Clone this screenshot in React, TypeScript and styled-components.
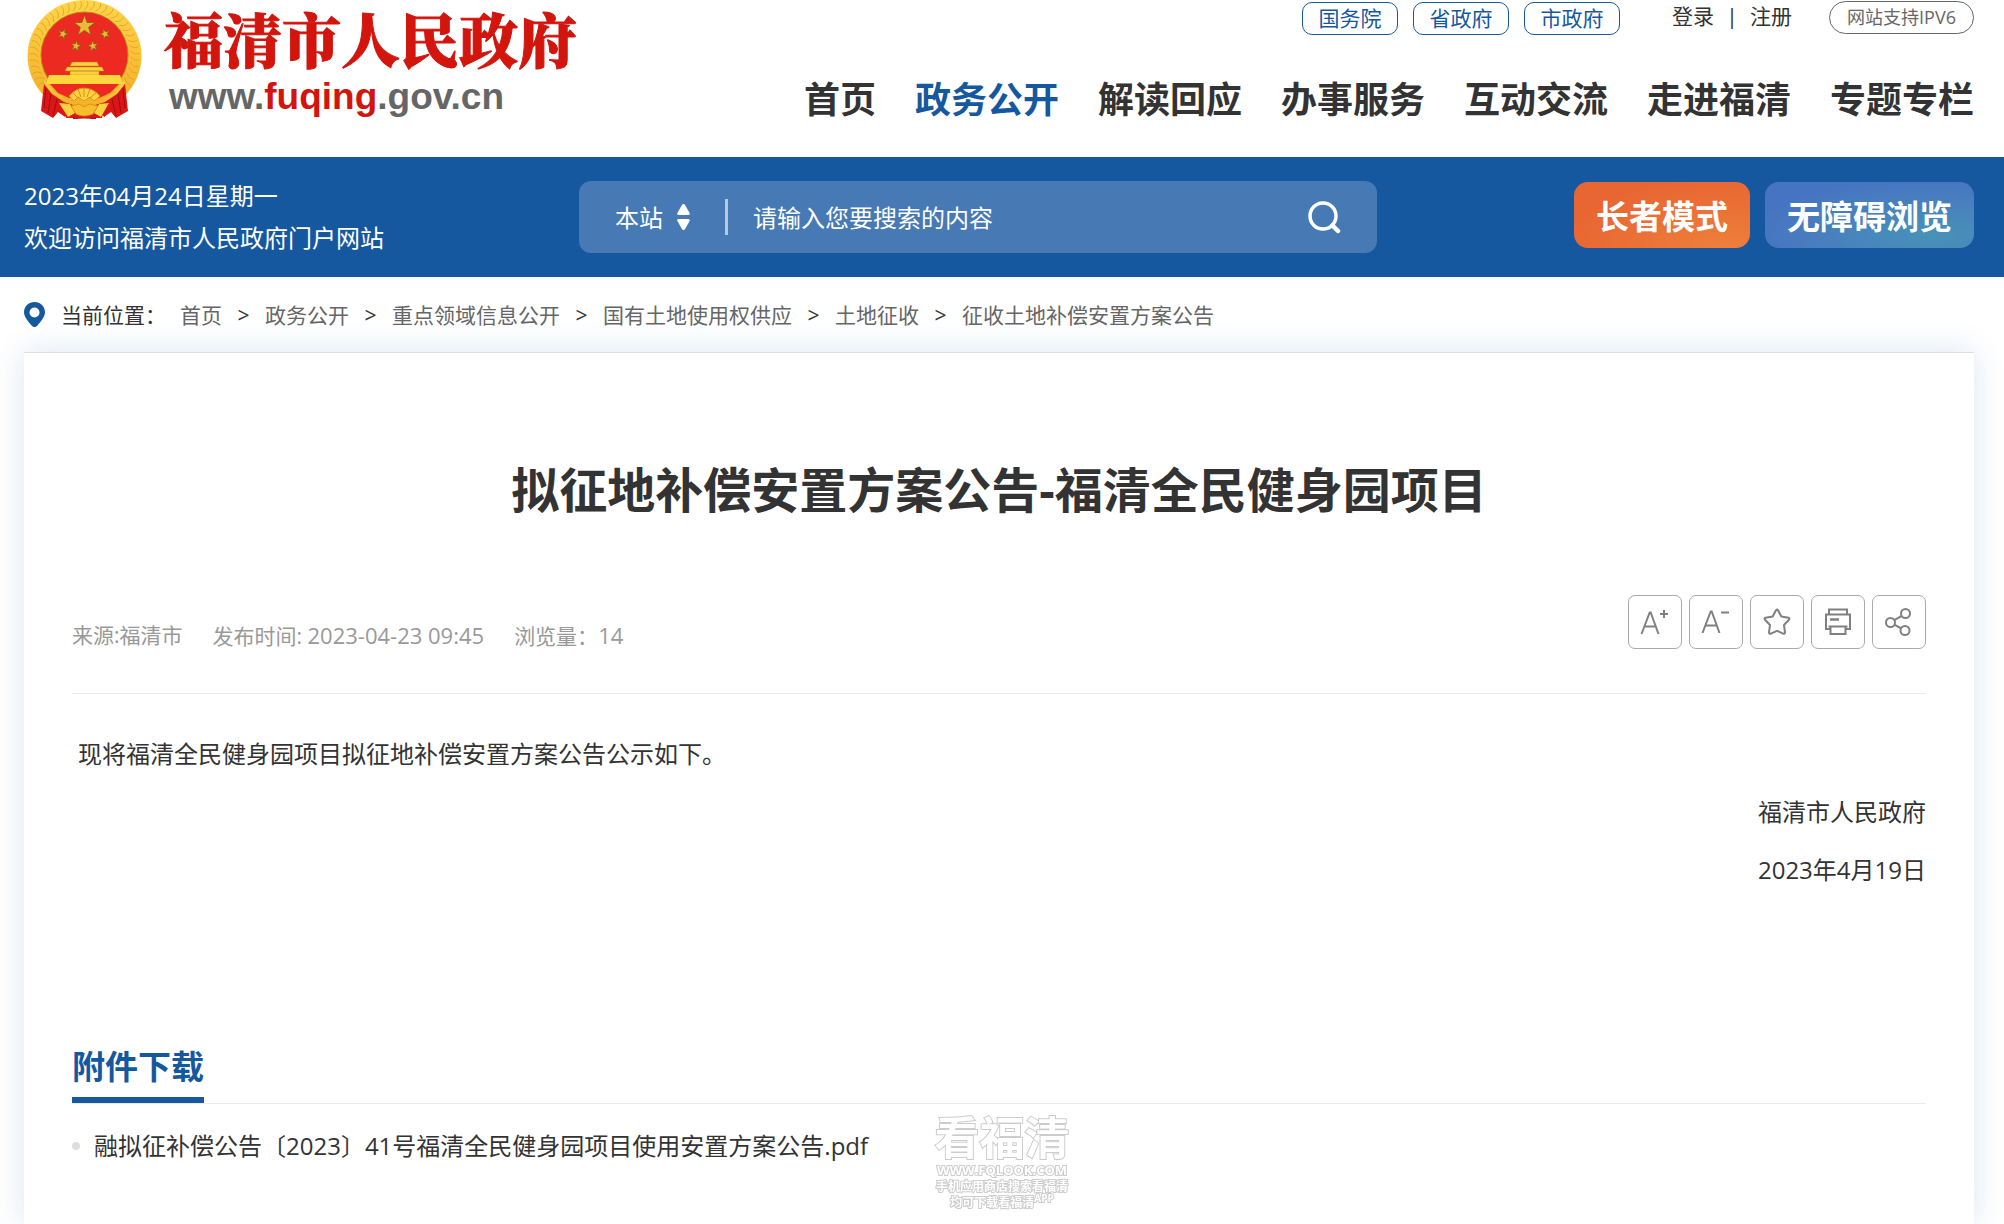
import React from "react";
import styled, { createGlobalStyle } from "styled-components";

const BLUE = "#16589f";
const INK = "#333333";
const SANS = '"Open Sans", "Noto Sans CJK SC", sans-serif';

const GlobalStyle = createGlobalStyle`
  *, *::before, *::after { box-sizing: border-box; }
  body {
    margin: 0;
    background: #ffffff;
    color: ${INK};
    font-family: ${SANS};
    font-size: 24px;
  }
  h1, h2, p, ul { margin: 0; padding: 0; }
  a { color: inherit; text-decoration: none; }
  button, input, select { font-family: inherit; }
`;

const Page = styled.div`
  display: flex;
  flex-direction: column;
  min-height: 100vh;
`;

const Header = styled.header`
  display: flex;
  justify-content: space-between;
  height: 157px;
  padding: 0 30px 0 27px;
`;

const Brand = styled.a`
  display: flex;
  align-items: flex-start;
  gap: 22px;
`;

const BrandText = styled.span`
  display: flex;
  flex-direction: column;
`;

const BrandName = styled.span`
  font-family: "Noto Serif CJK SC", "Noto Sans CJK SC", serif;
  font-size: 59px;
  font-weight: 900;
  line-height: 76px;
  color: #d2150d;
  -webkit-text-stroke: 1px #d2150d;
`;

const BrandUrl = styled.span`
  padding-left: 5px;
  font-family: "Liberation Sans", Arial, sans-serif;
  font-size: 37px;
  font-weight: 700;
  line-height: 42px;
  color: #666666;
`;

const BrandAccent = styled.span`
  color: #d2150d;
`;

const HeaderSide = styled.div`
  display: flex;
  flex-direction: column;
  align-items: flex-end;
`;

const TopLinks = styled.div`
  display: flex;
  align-items: flex-start;
  padding-top: 1px;
`;

const PillGroup = styled.div`
  display: flex;
  gap: 15px;
  padding-top: 1px;
`;

const Pill = styled.a`
  width: 96px;
  height: 33px;
  border: 1px solid ${BLUE};
  border-radius: 10px;
  color: ${BLUE};
  font-size: 21px;
  line-height: 31px;
  text-align: center;
`;

const Account = styled.div`
  display: flex;
  margin: 0 37px 0 52px;
  font-size: 21px;
  line-height: 31px;
`;

const AccountBar = styled.span`
  width: 36px;
  text-align: center;
`;

const Ipv6 = styled.a`
  width: 145px;
  height: 33px;
  border: 1px solid #666666;
  border-radius: 17px;
  color: #666666;
  font-size: 18px;
  line-height: 31px;
  text-align: center;
`;

const Nav = styled.nav`
  display: flex;
  gap: 39px;
  margin-top: 38px;
`;

const NavLink = styled.a<{ $active?: boolean }>`
  font-size: 36px;
  font-weight: 700;
  line-height: 54px;
  color: ${(p) => (p.$active ? BLUE : INK)};
`;

const Banner = styled.section`
  display: grid;
  grid-template-columns: 555fr 798fr 597fr;
  align-items: center;
  height: 120px;
  padding: 0 30px 0 24px;
  background: ${BLUE};
  color: #ffffff;
`;

const Welcome = styled.div`
  line-height: 42px;
  white-space: nowrap;
`;

const SearchForm = styled.form`
  display: flex;
  align-items: center;
  height: 72px;
  padding: 0 36px;
  border-radius: 12px;
  background: #4779b4;
`;

const Scope = styled.label`
  display: flex;
  align-items: center;
  gap: 14px;
  width: 110px;
`;

const ScopeSelect = styled.select`
  width: 48px;
  height: 40px;
  padding: 0;
  border: 0;
  background: transparent;
  color: #ffffff;
  font-size: 24px;
  appearance: none;
`;

const SearchInput = styled.input`
  flex: 1;
  min-width: 0;
  height: 36px;
  padding: 0 25px;
  border: 0;
  border-left: 3px solid #b5c9e1;
  outline: 0;
  background: transparent;
  color: #ffffff;
  font-size: 24px;
  &::placeholder { color: #ffffff; opacity: 1; }
`;

const SearchButton = styled.button`
  display: flex;
  padding: 0;
  border: 0;
  background: transparent;
  color: #ffffff;
`;

const Modes = styled.div`
  display: flex;
  justify-content: flex-end;
  gap: 15px;
  padding-bottom: 4px;
`;

const ModeButton = styled.button<{ $fill: string }>`
  height: 66px;
  padding: 0 22px;
  border: 0;
  border-radius: 14px;
  background: ${(p) => p.$fill};
  color: #ffffff;
  font-size: 33px;
  font-weight: 700;
  white-space: nowrap;
`;

const Crumbs = styled.nav`
  display: flex;
  align-items: center;
  height: 75px;
  padding: 0 24px;
  font-size: 21px;
  line-height: 32px;
`;

const CrumbLabel = styled.span`
  width: 119px;
  margin-left: 16px;
`;

const CrumbLink = styled.a`
  color: #666666;
`;

const CrumbArrow = styled.span`
  width: 43px;
  text-align: center;
`;

const Card = styled.main`
  flex: 1;
  margin: 0 30px 0 24px;
  padding: 0 48px;
  border-top: 1px solid #dcdfe6;
  background: #ffffff;
  box-shadow: 0 0 30px rgba(22, 88, 159, 0.15);
`;

const Title = styled.h1`
  padding-top: 101px;
  font-size: 48px;
  line-height: 72px;
  text-align: center;
`;

const MetaRow = styled.div`
  display: flex;
  justify-content: space-between;
  height: 168px;
  padding-top: 69px;
  border-bottom: 1px solid #ebebeb;
`;

const Meta = styled.div`
  display: flex;
  gap: 30px;
  padding-top: 24px;
  color: #999999;
  font-size: 21px;
  line-height: 32px;
`;

const Figure = styled.span`
  font-size: 22px;
`;

const Tools = styled.div`
  display: flex;
  gap: 7px;
`;

const ToolButton = styled.button`
  display: flex;
  align-items: center;
  justify-content: center;
  width: 54px;
  height: 54px;
  padding: 0;
  border: 1px solid #aaaaaa;
  border-radius: 7px;
  background: #ffffff;
  color: #808080;
`;

const Article = styled.article`
  padding-top: 31px;
  line-height: 58px;
`;

const Lead = styled.p`
  padding-left: 6px;
`;

const Signature = styled.p`
  text-align: right;
`;

const Attachments = styled.section`
  margin-top: 141px;
`;

const AttachHead = styled.div`
  display: flex;
  border-bottom: 1px solid #ebebeb;
`;

const AttachTitle = styled.h2`
  padding-bottom: 3px;
  border-bottom: 6px solid ${BLUE};
  color: ${BLUE};
  font-size: 33px;
  line-height: 54px;
`;

const FileList = styled.ul`
  padding-top: 21px;
  list-style: none;
`;

const FileItem = styled.li`
  display: flex;
  align-items: center;
  gap: 14px;
  line-height: 42px;
  &::before {
    content: "";
    width: 8px;
    height: 8px;
    border-radius: 50%;
    background: #dddddd;
  }
`;

const Watermark = styled.div`
  position: fixed;
  bottom: 14px;
  left: 50%;
  display: flex;
  flex-direction: column;
  align-items: center;
  transform: translateX(-50%);
  color: #ffffff;
  font-weight: 700;
  white-space: nowrap;
  pointer-events: none;
  paint-order: stroke fill;
  -webkit-text-stroke: 2px #cccccc;
`;

const WatermarkLine = styled.span<{ $size: number; $height: number }>`
  font-size: ${(p) => p.$size}px;
  line-height: ${(p) => p.$height}px;
`;

const WatermarkApp = styled.sup`
  font-size: 10px;
  line-height: 0;
`;

function starPoints(cx: number, cy: number, r: number, turn = 0) {
  return Array.from({ length: 10 }, (_, i) => {
    const a = ((i * 36 - 90 + turn) * Math.PI) / 180;
    const d = i % 2 ? r * 0.4 : r;
    return `${(cx + d * Math.cos(a)).toFixed(2)},${(cy + d * Math.sin(a)).toFixed(2)}`;
  }).join(" ");
}

function Emblem() {
  const grains = Array.from({ length: 44 }, (_, i) => 118 + i * 7);
  return (
    <svg width="115" height="119" viewBox="0 0 115 119" aria-hidden="true">
      <defs>
        <linearGradient id="gold" x1="0" y1="0" x2="0" y2="1">
          <stop offset="0" stopColor="#ffd54a" />
          <stop offset="1" stopColor="#f3ac22" />
        </linearGradient>
      </defs>
      <ellipse cx="57.500" cy="56" rx="57" ry="56" fill="url(#gold)" />
      {grains.map((a) => (
        <path key={a} d="M46 -2 Q50 3 55 1" fill="none" stroke="#dc9c28" strokeWidth="0.700" transform={`translate(57.5 56) rotate(${a})`} />
      ))}
      <ellipse cx="57.500" cy="55" rx="43.500" ry="43" fill="#ec2a22" stroke="#b5871c" strokeWidth="1" />
      <g fill="#e9b93a" stroke="#8c5c10" strokeWidth="0.800">
        <polygon points={starPoints(57.5, 26, 11)} />
        <polygon points={starPoints(36, 34, 5.5, 20)} />
        <polygon points={starPoints(78, 34, 5.5, -20)} />
        <polygon points={starPoints(49, 46, 5.5, 10)} />
        <polygon points={starPoints(66, 46, 5.5, -10)} />
      </g>
      <path d="M45 62h25l2 4H43zM40 67h35l2 4H38zM43 71h29v4H43z" fill="#ffd23e" stroke="#c07a14" strokeWidth="0.500" />
      <path d="M22 75h71l3 9H19z" fill="#ffd83f" />
      <path d="M17 80l11 12 14 9h31l14-9 11-12-3 22-14 5H34l-14-5z" fill="url(#gold)" />
      <path d="M23 84h69l-9 9-11 5-15-2-15 2-11-5z" fill="#ec2a22" />
      <path d="M17 84l8 10 12 8 9 3-8 12-7-5-5 6-12-7z" fill="#da1716" />
      <path d="M98 84l-8 10-12 8-9 3 8 12 7-5 5 6 12-7z" fill="#da1716" />
      <path d="M19 88l-2 20M24 94l-3 19M30 99l-4 17M96 88l2 20M91 94l3 19M85 99l4 17" stroke="#9f0c10" strokeWidth="1" fill="none" />
      <path d="M31 104q13-3 26 8 13-11 27-8-7 3-9 14H39q-2-11-8-14z" fill="#da1716" />
      <path d="M32 103l11 1 5 9-7 4zM82 103l-10 1-5 9 7 4z" fill="#ffd23e" />
      <path d="M42 96q7-8 15-8 9 0 16 8l-6 5-4-4-6 4-6-4-4 4z" fill="#ffd23e" stroke="#d48f1c" strokeWidth="0.800" />
      <path d="M57 88v9M51 89l3 8M63 89l-3 8M46 93l5 5M69 93l-6 5" stroke="#d48f1c" strokeWidth="1" />
      <path d="M44 106l8-2 5 3 6-3 8 2-5 8q-9 4-17 0z" fill="#f7bd2c" stroke="#d48f1c" strokeWidth="0.800" />
      <path d="M46 117q11 3 23 0v2H46z" fill="#c21316" />
    </svg>
  );
}

const SortArrows = () => (
  <svg width="13" height="26" viewBox="0 0 13 26" fill="#ffffff" aria-hidden="true">
    <path d="M6.500 0q1 0 1.700 1.300L12.600 9q.6 2-1.200 2H1.600Q-.2 11 .4 9l4.400-7.700Q5.500 0 6.500 0z" />
    <path d="M6.500 26q1 0 1.700-1.300L12.600 17q.6-2-1.200-2H1.600Q-.2 15 .4 17l4.400 7.700Q5.500 26 6.500 26z" />
  </svg>
);

const SearchIcon = () => (
  <svg width="33" height="33" viewBox="0 0 33 33" fill="none" stroke="#ffffff" strokeLinecap="round" aria-hidden="true">
    <circle cx="15" cy="15" r="13" strokeWidth="3.500" />
    <path d="M24.500 24.500l5.500 5.500" strokeWidth="4.500" />
  </svg>
);

const PinIcon = () => (
  <svg width="21" height="25" viewBox="0 0 21 25" aria-hidden="true">
    <path fillRule="evenodd" fill={BLUE} d="M10.500 0C4.500 0 0 4.500 0 10.300c0 4.700 4.500 9.700 7.800 13.500 1.600 1.600 3.800 1.600 5.400 0C16.500 20 21 15 21 10.300 21 4.500 16.500 0 10.500 0zm0 5.500a5 5 0 1 1 0 10 5 5 0 0 1 0-10z" />
  </svg>
);

const ToolIcon = ({ children }: { children: React.ReactNode }) => (
  <svg width="30" height="30" viewBox="0 0 30 30" fill="none" stroke="currentColor" strokeWidth="2" aria-hidden="true">
    {children}
  </svg>
);

const tools = [
  { label: "放大字体", icon: <path d="M1.500 27L9.700 5.500h1L18.500 27M4.500 19.500h11.500M20 7h8M24 3v8" /> },
  { label: "缩小字体", icon: <path d="M1.500 26L9.700 4.500h1L18.500 26M4.500 18.500h11.500M20 5.500h8" /> },
  {
    label: "收藏",
    icon: (
      <path
        strokeLinejoin="round"
        d="M14 3.300q1-1.500 2 0l3.300 6.200 7.200 1.300q1.500.6.500 1.900l-5 5.300 1 7.500q-.2 1.800-1.800 1.200L15 23.800l-6.200 2.900q-1.600.6-1.800-1.200l1-7.500-5-5.300q-1-1.300.5-1.900l7.200-1.300z"
      />
    ),
  },
  {
    label: "打印",
    icon: (
      <>
        <path d="M6 7V2.500h18V7M6.500 22H3V7.500h24V22h-3.500M5.500 19.500h19M7.500 19.500V27h15v-7.500" />
        <path d="M7 12.500h9" strokeWidth="2.500" />
      </>
    ),
  },
  {
    label: "分享",
    icon: (
      <>
        <circle cx="6.500" cy="15.500" r="4.500" />
        <circle cx="21.500" cy="6.500" r="4.500" />
        <circle cx="21" cy="23.500" r="4.500" />
        <path d="M10.300 13.200l7.400-4.300M10.300 17.700l7 3.800" />
      </>
    ),
  },
];

const navItems = ["首页", "政务公开", "解读回应", "办事服务", "互动交流", "走进福清", "专题专栏"];
const crumbs = ["首页", "政务公开", "重点领域信息公开", "国有土地使用权供应", "土地征收", "征收土地补偿安置方案公告"];

export default function App() {
  return (
    <>
      <GlobalStyle />
      <Page>
        <Header>
          <Brand href="#">
            <Emblem />
            <BrandText>
              <BrandName>福清市人民政府</BrandName>
              <BrandUrl>
                www.<BrandAccent>fuqing</BrandAccent>.gov.cn
              </BrandUrl>
            </BrandText>
          </Brand>
          <HeaderSide>
            <TopLinks>
              <PillGroup>
                <Pill href="#">国务院</Pill>
                <Pill href="#">省政府</Pill>
                <Pill href="#">市政府</Pill>
              </PillGroup>
              <Account>
                <a href="#">登录</a>
                <AccountBar>|</AccountBar>
                <a href="#">注册</a>
              </Account>
              <Ipv6 href="#">网站支持IPV6</Ipv6>
            </TopLinks>
            <Nav>
              {navItems.map((item) => (
                <NavLink key={item} href="#" $active={item === "政务公开"}>
                  {item}
                </NavLink>
              ))}
            </Nav>
          </HeaderSide>
        </Header>

        <Banner>
          <Welcome>
            <p>2023年04月24日星期一</p>
            <p>欢迎访问福清市人民政府门户网站</p>
          </Welcome>
          <SearchForm onSubmit={(e) => e.preventDefault()}>
            <Scope>
              <ScopeSelect aria-label="搜索范围">
                <option>本站</option>
              </ScopeSelect>
              <SortArrows />
            </Scope>
            <SearchInput type="text" aria-label="搜索" placeholder="请输入您要搜索的内容" />
            <SearchButton type="submit" aria-label="搜索">
              <SearchIcon />
            </SearchButton>
          </SearchForm>
          <Modes>
            <ModeButton type="button" $fill="radial-gradient(ellipse at 85% 100%, #ee7f3b 0%, #e86632 75%)">
              长者模式
            </ModeButton>
            <ModeButton type="button" $fill="radial-gradient(ellipse at 80% 80%, #4892b8 0%, #4774c2 75%)">
              无障碍浏览
            </ModeButton>
          </Modes>
        </Banner>

        <Crumbs aria-label="当前位置">
          <PinIcon />
          <CrumbLabel>当前位置：</CrumbLabel>
          {crumbs.map((item, i) => (
            <React.Fragment key={item}>
              {i > 0 && <CrumbArrow>&gt;</CrumbArrow>}
              <CrumbLink href="#">{item}</CrumbLink>
            </React.Fragment>
          ))}
        </Crumbs>

        <Card>
          <Title>拟征地补偿安置方案公告-福清全民健身园项目</Title>
          <MetaRow>
            <Meta>
              <span>来源:福清市</span>
              <span>
                发布时间: <Figure>2023-04-23 09:45</Figure>
              </span>
              <span>
                浏览量：<Figure>14</Figure>
              </span>
            </Meta>
            <Tools>
              {tools.map((t) => (
                <ToolButton key={t.label} type="button" aria-label={t.label}>
                  <ToolIcon>{t.icon}</ToolIcon>
                </ToolButton>
              ))}
            </Tools>
          </MetaRow>
          <Article>
            <Lead>现将福清全民健身园项目拟征地补偿安置方案公告公示如下。</Lead>
            <Signature>福清市人民政府</Signature>
            <Signature>2023年4月19日</Signature>
          </Article>
          <Attachments>
            <AttachHead>
              <AttachTitle>附件下载</AttachTitle>
            </AttachHead>
            <FileList>
              <FileItem>
                <a href="#">融拟征补偿公告〔2023〕41号福清全民健身园项目使用安置方案公告.pdf</a>
              </FileItem>
            </FileList>
          </Attachments>
        </Card>
      </Page>
      <Watermark aria-hidden="true">
        <WatermarkLine $size={45} $height={48}>看福清</WatermarkLine>
        <WatermarkLine $size={13} $height={16}>WWW.FQLOOK.COM</WatermarkLine>
        <WatermarkLine $size={12} $height={18}>手机应用商店搜索看福清</WatermarkLine>
        <WatermarkLine $size={12} $height={14}>
          均可下载看福清<WatermarkApp>APP</WatermarkApp>
        </WatermarkLine>
      </Watermark>
    </>
  );
}
